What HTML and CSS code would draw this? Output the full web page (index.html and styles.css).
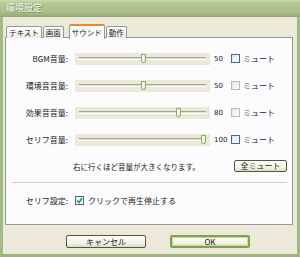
FILE: index.html
```html
<!DOCTYPE html>
<html lang="ja">
<head>
    <meta charset="UTF-8">
    <title>環境設定</title>
    <link rel="stylesheet" href="styles.css">
</head>
<body>
    <div class="window">
        <div class="titlebar">環境設定</div>
        <div class="client">
            <div class="tabs">
                <div class="tab">テキスト</div>
                <div class="tab">画面</div>
                <div class="tab active">サウンド</div>
                <div class="tab">動作</div>
            </div>
            <div class="panel">
                <div class="rows">
                    <div class="row">
                        <span class="label">BGM音量:</span>
                        <div class="slider"><div class="track"></div><div class="thumb" style="left: 66px"></div></div>
                        <span class="value">50</span>
                        <span class="check"><span class="box"></span>ミュート</span>
                    </div>
                    <div class="row">
                        <span class="label">環境音音量:</span>
                        <div class="slider"><div class="track"></div><div class="thumb" style="left: 66px"></div></div>
                        <span class="value">50</span>
                        <span class="check"><span class="box light"></span>ミュート</span>
                    </div>
                    <div class="row">
                        <span class="label">効果音音量:</span>
                        <div class="slider"><div class="track"></div><div class="thumb" style="left: 101px"></div></div>
                        <span class="value">80</span>
                        <span class="check"><span class="box light"></span>ミュート</span>
                    </div>
                    <div class="row">
                        <span class="label">セリフ音量:</span>
                        <div class="slider"><div class="track"></div><div class="thumb" style="left: 126px"></div></div>
                        <span class="value">100</span>
                        <span class="check"><span class="box"></span>ミュート</span>
                    </div>
                </div>
                <div class="hint-row">
                    <span class="hint">右に行くほど音量が大きくなります。</span>
                    <button class="btn small">全ミュート</button>
                </div>
                <div class="sep"></div>
                <div class="row serif">
                    <span class="label">セリフ設定:</span>
                    <span class="check"><span class="box checked">
                        <svg width="7" height="7" viewBox="0 0 7 7"><path d="M1 3.5 L3 5.5 L6 1.2" fill="none" stroke="#21a121" stroke-width="1.6"/></svg>
                    </span>クリックで再生停止する</span>
                </div>
            </div>
            <div class="buttons">
                <button class="btn">キャンセル</button>
                <button class="btn default">OK</button>
            </div>
        </div>
    </div>
</body>
</html>
```

FILE: styles.css
```css
* {
    margin: 0;
    padding: 0;
    box-sizing: border-box;
}

body {
    width: 300px;
    height: 257px;
    background: #ece9d8;
    font-family: "Noto Sans CJK JP", "DejaVu Sans", sans-serif;
    font-size: 8px;
    color: #1a1a1a;
    overflow: hidden;
}

.window {
    display: flex;
    flex-direction: column;
    height: 257px;
    border-left: 3px solid #a3ba85;
    border-right: 3px solid #a3ba85;
    border-bottom: 3px solid #9cb47c;
}

.titlebar {
    height: 17px;
    margin: 0 -3px;
    padding: 0 0 0 6px;
    line-height: 16px;
    font-size: 9px;
    color: #f4f7ee;
    text-shadow: 1px 1px 0 #7d955d;
    background: linear-gradient(to bottom, #cddcb0 0, #b4c795 3px, #a9bf89 12px, #98b077 16px, #8aa36a 17px);
}

.client {
    flex: 1;
    padding: 7px 4px 0 2px;
}

.tabs {
    display: flex;
    height: 14px;
    padding-left: 1px;
    position: relative;
    z-index: 1;
}

.tab {
    margin-top: 2px;
    height: 12px;
    padding: 0 2px;
    line-height: 11px;
    font-size: 7.5px;
    border: 1px solid #919b9c;
    border-bottom: none;
    border-radius: 2px 2px 0 0;
    background: linear-gradient(to bottom, #fefefe, #f1f0e8);
    margin-right: 1px;
}

.tab.active {
    margin: 0 1px 0 4px;
    height: 15px;
    padding: 0 2px;
    line-height: 13px;
    background: #fcfcfe;
    border-top: 2px solid #e68b2c;
}

.panel {
    height: 188px;
    margin-top: -1px;
    border: 1px solid #919b9c;
    background: #fcfcfe;
    display: flex;
    flex-direction: column;
}

.rows {
    padding-top: 7px;
}

.row {
    display: flex;
    align-items: center;
    height: 27px;
}

.label {
    width: 62px;
    text-align: right;
}

.slider {
    position: relative;
    width: 135px;
    height: 12px;
    margin-left: 7px;
    background: #ece9d9;
}

.track {
    position: absolute;
    left: 4px;
    right: 4px;
    top: 4px;
    height: 3px;
    border-top: 1px solid #a3a39a;
    border-bottom: 1px solid #ffffff;
    background: #e2e0d2;
}

.thumb {
    position: absolute;
    top: 1px;
    width: 5px;
    height: 9px;
    border: 1px solid #85b05f;
    border-radius: 1px 1px 3px 3px;
    background: linear-gradient(to right, #ffffff, #e6eedd);
}

.value {
    width: 21px;
    padding-left: 4px;
    font-family: "DejaVu Sans", sans-serif;
    font-size: 7px;
}

.check {
    display: flex;
    align-items: center;
}

.box {
    width: 9px;
    height: 9px;
    margin-right: 3px;
    border: 1px solid #3c6aa0;
    background: linear-gradient(135deg, #e5e4dc, #ffffff);
    display: flex;
    align-items: center;
    justify-content: center;
}

.box.light {
    border-color: #b4bcc4;
}

.hint-row {
    display: flex;
    align-items: center;
    justify-content: space-between;
    margin-top: 7px;
    height: 12px;
    padding: 0 5px 0 67px;
    font-size: 7.5px;
}

.btn {
    font-family: "Noto Sans CJK JP", "DejaVu Sans", sans-serif;
    font-size: 8px;
    color: #1a1a1a;
    border: 1px solid #4f5a43;
    border-radius: 2px;
    background: linear-gradient(to bottom, #fefefc, #f2f0e4 70%, #dcd9c6);
}

.btn.small {
    width: 53px;
    height: 12px;
    line-height: 10px;
}

.sep {
    margin: 10px 5px 0 6px;
    height: 2px;
    border-top: 1px solid #d0d0bf;
    border-bottom: 1px solid #ffffff;
}

.row.serif {
    margin-top: 10px;
    height: 12px;
}

.row.serif .check {
    margin-left: 7px;
}

.row.serif .box {
    margin-right: 4px;
    background: #f4f4f0;
}

.buttons {
    display: flex;
    gap: 24px;
    margin-top: 10px;
    padding-left: 61px;
}

.buttons .btn {
    width: 80px;
    height: 13px;
    line-height: 11px;
}

.btn.default {
    border: 2px solid #7ea451;
    box-shadow: inset 0 0 0 1px #c4d8a0;
    line-height: 9px;
}
```
